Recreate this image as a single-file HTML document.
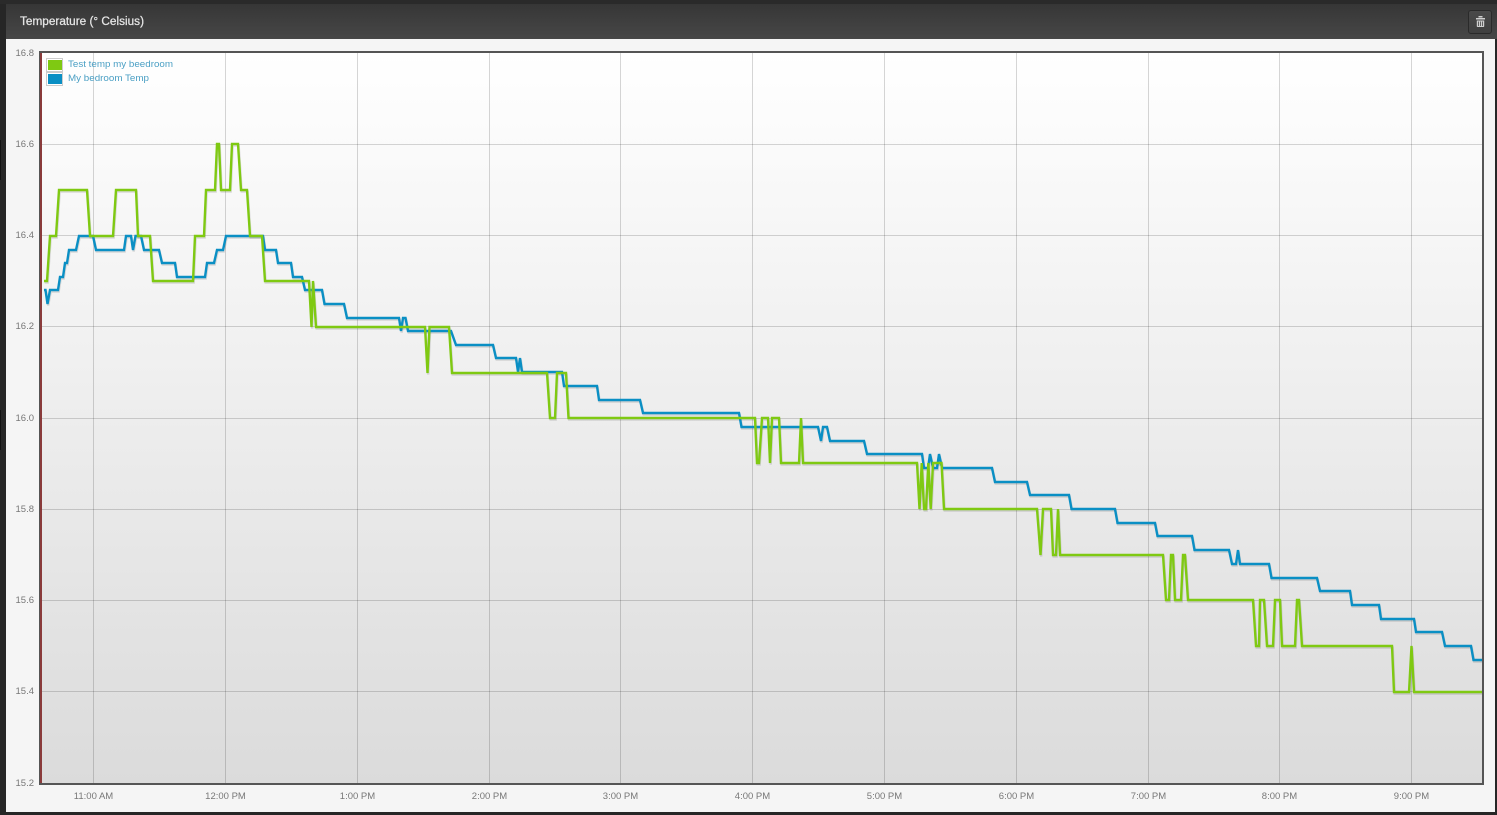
<!DOCTYPE html>
<html><head><meta charset="utf-8"><style>
html,body{margin:0;padding:0;width:1497px;height:815px;overflow:hidden;background:#262626}
text{font-family:"Liberation Sans",sans-serif}
</style></head><body>
<svg width="1497" height="815" viewBox="0 0 1497 815" style="display:block">
<defs>
<linearGradient id="h" x1="0" y1="0" x2="0" y2="1"><stop offset="0" stop-color="#363636"/><stop offset="1" stop-color="#474747"/></linearGradient>
<linearGradient id="p" x1="0" y1="0" x2="0" y2="1"><stop offset="0" stop-color="#ffffff"/><stop offset="1" stop-color="#dbdbdb"/></linearGradient>
<linearGradient id="b" x1="0" y1="0" x2="0" y2="1"><stop offset="0" stop-color="#4a4a4a"/><stop offset="1" stop-color="#404040"/></linearGradient>
<polyline id="green" fill="none" stroke-linejoin="miter" points="44,281 47,281 50,236 56,236 59,190 87,190 90,236 113,236 116,190 136,190 138,236 150,236 153,281 193,281 195,236 204,236 206,190 215,190 217,144 219,144 221,190 230,190 232,144 238,144 241,190 247,190 250,236 262,236 265,281 309,281 311.5,327 313,281 316,327 425,327 427.5,373 429.5,327 449,327 452,373 547,373 550,418 555,418 557,373 566,373 568.5,418 755,418 757,463 759,463 762,418 768,418 770,463 772,418 779,418 781,463 799,463 801,418 803,463 917,463 919.5,509 921.7,463 924,509 926,509 928.3,463 930.7,509 933,463 941.5,463 944,509 1037,509 1040.5,555 1043,509 1051,509 1053,555 1056,555 1058,509 1060,555 1163,555 1166,600 1169,600 1171,555 1173,555 1175,600 1181,600 1183,555 1185,555 1188,600 1253,600 1256,646 1259,646 1260,600 1264,600 1267,646 1273,646 1275,600 1280,600 1282,646 1295,646 1297,600 1299,600 1302,646 1392,646 1394,692 1409,692 1411.5,646 1414,692 1482,692"/>
<polyline id="blue" fill="none" stroke-linejoin="miter" points="44,290 45.5,290 47.5,304 50,290 58,290 60,277 63,277 65,263 67,263 69,250 76,250 79,236 93,236 96,250 124,250 126,236 131,236 133,250 135.5,236 141,236 144,250 159,250 162,263 175,263 177,277 205,277 207,263 214,263 217,250 223,250 226,236 263,236 265,250 276,250 278,263 291,263 293,277 302,277 305,290 322,290 324.5,304 344,304 347,318 399,318 401,331 403,318 405.5,318 408,331 451,331 456,345 493,345 496,358 516,358 518,372 520,358 522,372 562,372 564,386 597,386 599,400 640,400 643,413 739,413 741.5,427 818,427 821,441 823,427 827,427 830,441 864,441 867,454 922,454 924,468 928,468 930,454 933,468 937,468 939,454 942,468 992,468 995,482 1027,482 1030,495 1069,495 1071.5,509 1115,509 1117.5,523 1155,523 1157.5,536 1192,536 1194.5,550 1229,550 1232,564 1236,564 1238,550 1240,564 1269,564 1271.5,578 1317,578 1320,591 1350,591 1352,605 1379,605 1381,619 1414,619 1416,632 1442,632 1445,646 1471,646 1473.5,660 1482,660"/>
</defs>

<!-- page chrome -->
<rect x="0" y="0" width="1497" height="815" fill="#262626"/>
<rect x="0" y="0" width="1497" height="4" fill="#2a2a2a"/>
<rect x="0" y="140" width="1" height="40" fill="#111"/>
<rect x="0" y="410" width="1" height="40" fill="#111"/>
<rect x="6" y="4" width="1491" height="35" fill="url(#h)"/>
<rect x="6" y="39" width="1489" height="773" fill="#f5f5f5"/>
<text x="20" y="25" font-size="11.5" fill="#e6e6e6" stroke="#e6e6e6" stroke-width=".25" textLength="124" lengthAdjust="spacingAndGlyphs">Temperature (° Celsius)</text>

<!-- trash button -->
<rect x="1468.5" y="10.5" width="23" height="23" rx="2.5" fill="url(#b)" stroke="#2a2a2a"/>
<g fill="#cfcfcf">
<rect x="1476" y="18" width="9" height="1.5"/><rect x="1478.5" y="16" width="4" height="1.5"/>
<path d="M1476.8 20.500h7.400v5.700q0 .8-.8.8h-5.800q-.8 0-.8-.8zM1478.200 21.500v4.500h.8v-4.500zM1480.100 21.500v4.500h.8v-4.500zM1482 21.500v4.500h.8v-4.500z" fill-rule="evenodd"/>
</g>

<!-- plot -->
<rect x="41" y="53" width="1441" height="730" fill="url(#p)"/>
<g stroke="#000" stroke-opacity=".16" stroke-width="1">
<path d="M93.500 53V783M225.500 53V783M357.500 53V783M489.500 53V783M620.500 53V783M752.500 53V783M884.500 53V783M1016.500 53V783M1148.500 53V783M1279.500 53V783M1411.500 53V783"/>
<path d="M41 144.500H1482M41 235.500H1482M41 326.500H1482M41 418.500H1482M41 509.500H1482M41 600.500H1482M41 691.500H1482"/>
</g>

<!-- shadows -->
<g transform="translate(.7,1.6)" stroke="#000" stroke-opacity=".12" stroke-width="2.400"><use href="#blue"/><use href="#green"/></g>
<g stroke="#0a8fc4" stroke-width="2.400"><use href="#blue"/></g>
<g stroke="#7fc912" stroke-width="2.400"><use href="#green"/></g>

<!-- plot border -->
<rect x="40" y="52" width="1443" height="732" fill="none" stroke="#555" stroke-width="2"/>
<rect x="40" y="53" width="2" height="730" fill="#8a3b3b"/>

<!-- legend -->
<rect x="46.500" y="58.500" width="16" height="13" fill="#fff" stroke="#ccc"/>
<rect x="48" y="60" width="14" height="10" fill="#7fc912"/>
<rect x="46.500" y="72.500" width="16" height="13" fill="#fff" stroke="#ccc"/>
<rect x="48" y="74" width="14" height="10" fill="#0a8fc4"/>
<g font-size="9.500" fill="#4a9fc4">
<text x="68" y="67" textLength="105" lengthAdjust="spacingAndGlyphs">Test temp my beedroom</text>
<text x="68" y="81" textLength="81" lengthAdjust="spacingAndGlyphs">My bedroom Temp</text>
</g>

<!-- y labels -->
<g font-size="9.500" fill="#777" text-anchor="end">
<text x="34" y="56">16.8</text><text x="34" y="147">16.6</text><text x="34" y="238">16.4</text><text x="34" y="329">16.2</text><text x="34" y="421">16.0</text><text x="34" y="512">15.8</text><text x="34" y="603">15.6</text><text x="34" y="694">15.4</text><text x="34" y="786">15.2</text>
</g>
<!-- x labels -->
<g font-size="9.500" fill="#777" text-anchor="middle">
<text x="93.500" y="799">11:00 AM</text><text x="225.500" y="799">12:00 PM</text><text x="357.500" y="799">1:00 PM</text><text x="489.500" y="799">2:00 PM</text><text x="620.500" y="799">3:00 PM</text><text x="752.500" y="799">4:00 PM</text><text x="884.500" y="799">5:00 PM</text><text x="1016.500" y="799">6:00 PM</text><text x="1148.500" y="799">7:00 PM</text><text x="1279.500" y="799">8:00 PM</text><text x="1411.500" y="799">9:00 PM</text>
</g>
</svg>
</body></html>
